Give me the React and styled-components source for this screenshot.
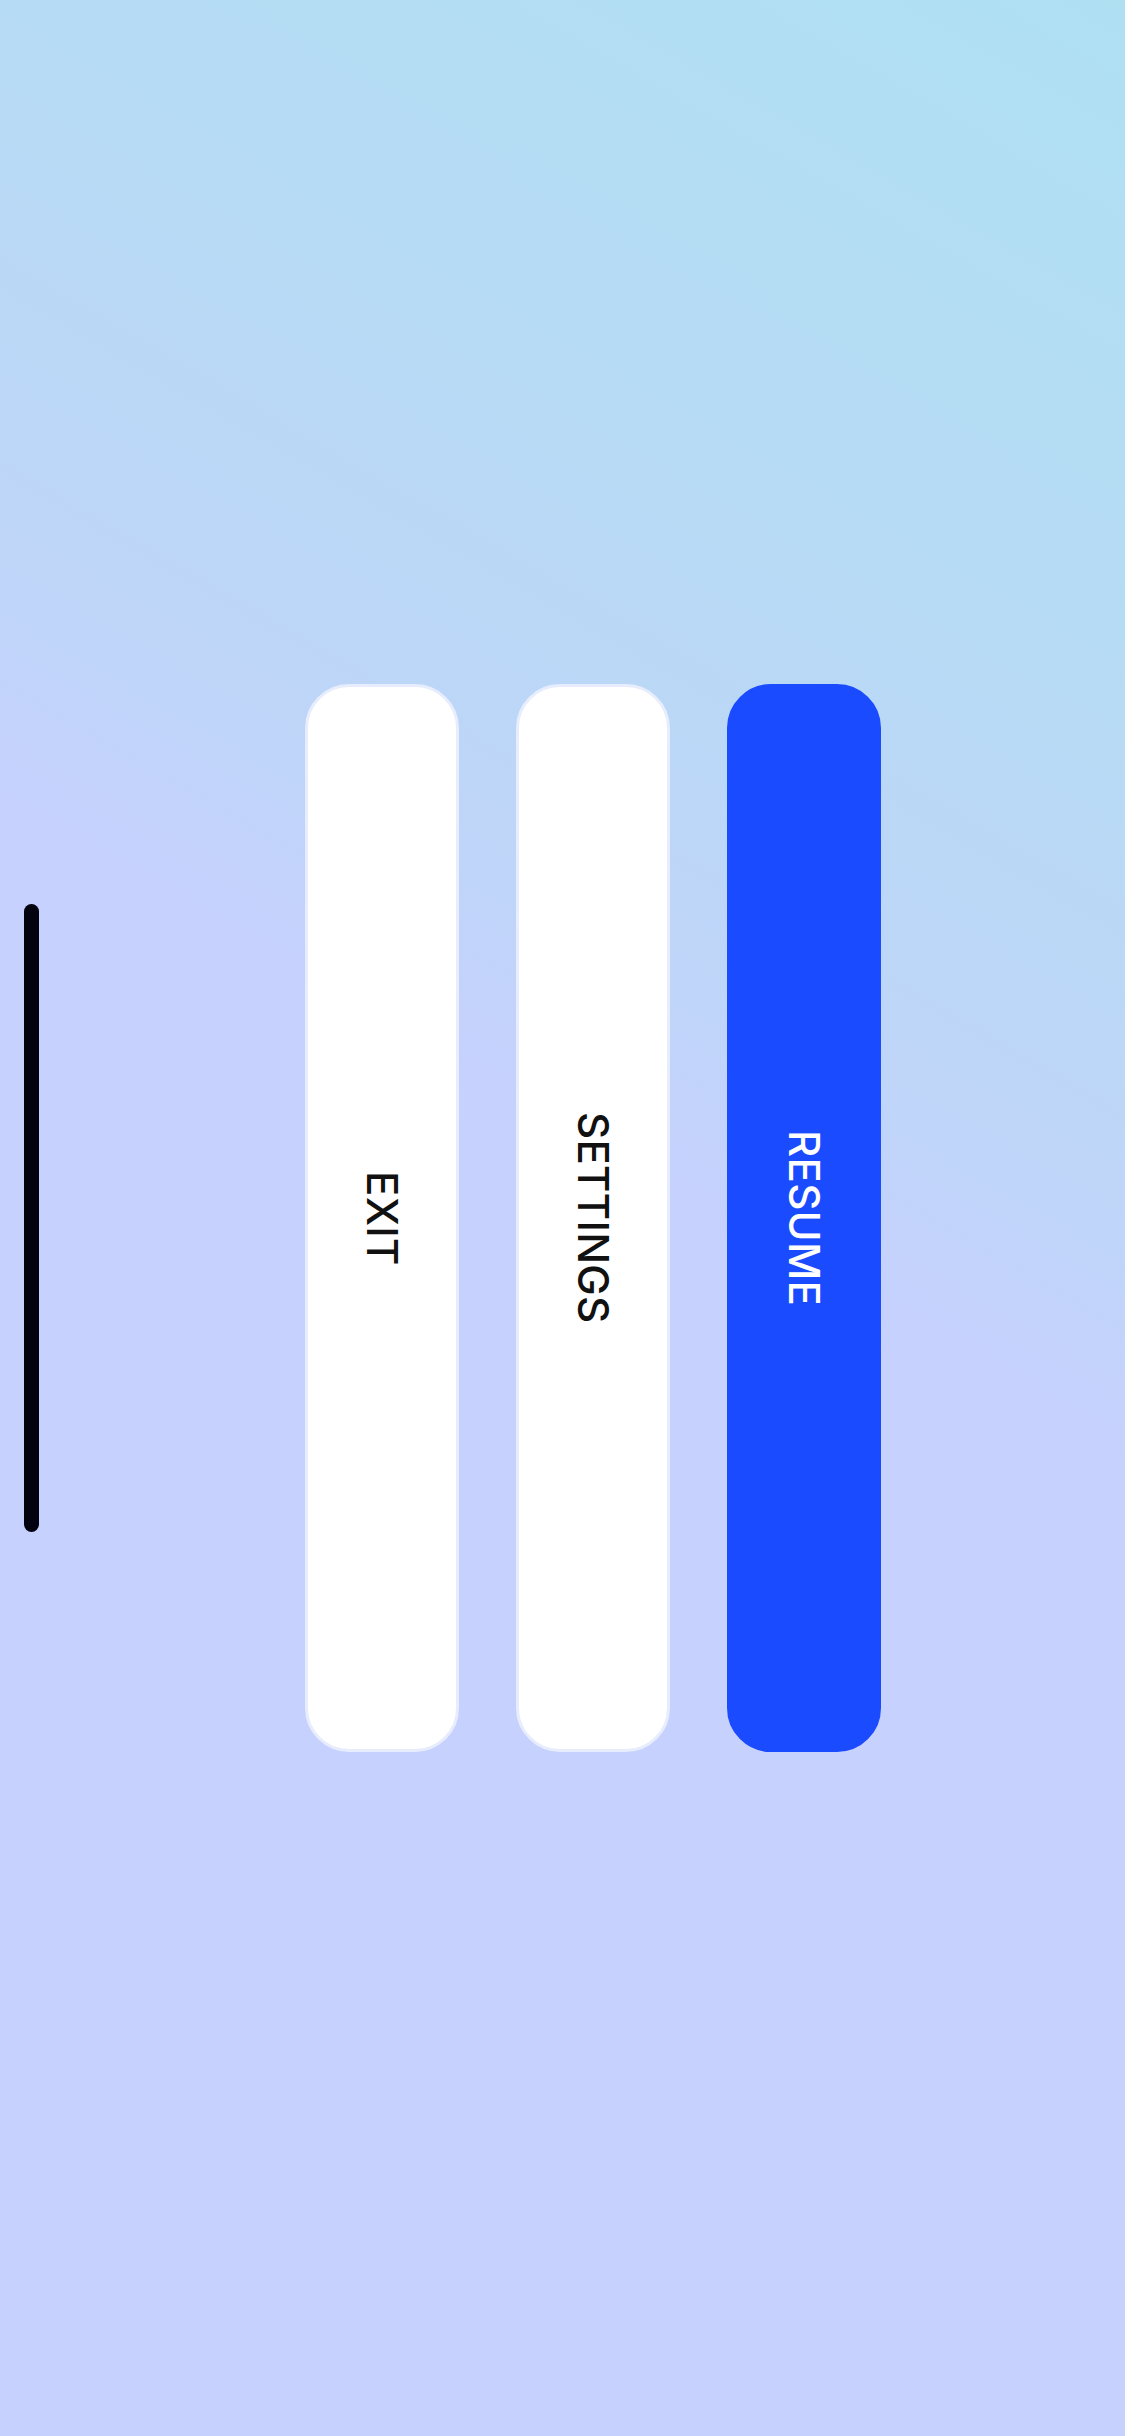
import React from "react";
import styled, { createGlobalStyle } from "styled-components";

const Global = createGlobalStyle`
  html, body { margin: 0; padding: 0; }
  body {
    font-family: Inter, "Noto Sans", "Liberation Sans", sans-serif;
    background: #c7d1fe;
  }
  * { box-sizing: border-box; }
`;

const Screen = styled.div`
  width: 1125px;
  height: 2436px;
  display: flex;
  align-items: center;
  padding-left: 24px;
  background: linear-gradient(
    210deg,
    #afe0f2 0%,
    #b5dcf4 18%,
    #bad8f6 30%,
    #bfd5f9 40%,
    #c4d2fc 45%,
    #c7d1fe 49%,
    #c7d1fe 100%
  );
  overflow: hidden;
`;

const HomeIndicator = styled.div`
  width: 15px;
  height: 628px;
  border-radius: 8px;
  background: #02030f;
  flex-shrink: 0;
`;

const Menu = styled.nav`
  display: flex;
  gap: 57px;
  margin-left: 266px;
`;

const MenuButton = styled.button`
  width: 154px;
  height: 1068px;
  border-radius: 44px;
  border: 3px solid ${(p) => (p.$primary ? "#1b4bff" : "#e7edfc")};
  background: ${(p) => (p.$primary ? "#1b4bff" : "#ffffff")};
  color: ${(p) => (p.$primary ? "#ffffff" : "#111111")};
  display: flex;
  align-items: center;
  justify-content: center;
  padding: 0;
  cursor: pointer;
`;

const Label = styled.span`
  writing-mode: vertical-rl;
  font-family: Inter, "Noto Sans", "Liberation Sans", sans-serif;
  font-size: 42px;
  font-weight: 450;
  letter-spacing: 0.3px;
  line-height: 1;
`;

const items = [
  { label: "EXIT" },
  { label: "SETTINGS" },
  { label: "RESUME", primary: true },
];

export default function App() {
  return (
    <>
      <Global />
      <Screen>
        <HomeIndicator />
        <Menu>
          {items.map((it) => (
            <MenuButton key={it.label} $primary={it.primary}>
              <Label>{it.label}</Label>
            </MenuButton>
          ))}
        </Menu>
      </Screen>
    </>
  );
}
